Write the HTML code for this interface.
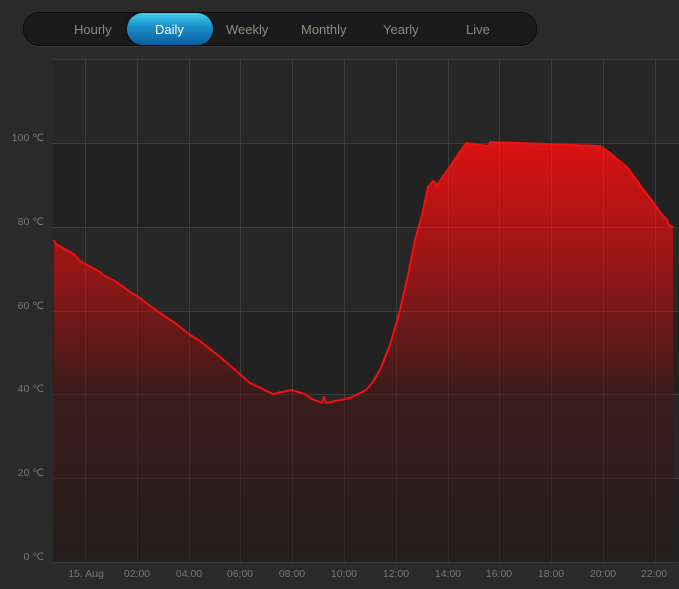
<!DOCTYPE html>
<html><head><meta charset="utf-8"><style>
html,body{margin:0;padding:0;background:#2a2a2a;width:679px;height:589px;overflow:hidden;font-family:"Liberation Sans",sans-serif}
.nav{position:absolute;left:23px;top:12px;width:512px;height:32px;border-radius:16px;background:#1a1a1a;border:1px solid #0c0c0c;box-shadow:0 1px 0 #3a3a3a}
.nav span{position:absolute;top:9px;font-size:13px;color:#8a8a8a}
.act{position:absolute;left:103px;top:0;width:86px;height:32px;border-radius:16px;background:linear-gradient(#3cd0ee,#1a8cc8 45%,#0a5fa0);box-shadow:0 0 2px #000}
</style></head><body>
<div class="nav">
<div class="act"></div>
<span style="left:50px">Hourly</span>
<span style="left:131px;color:#fff">Daily</span>
<span style="left:202px;color:#8a9080">Weekly</span>
<span style="left:277px;color:#8a9080">Monthly</span>
<span style="left:359px">Yearly</span>
<span style="left:442px">Live</span>
</div>
<svg width="679" height="589" style="position:absolute;left:0;top:0" xmlns="http://www.w3.org/2000/svg">
<defs><linearGradient id="g" x1="0" y1="143" x2="0" y2="562" gradientUnits="userSpaceOnUse">
<stop offset="0" stop-color="#ee1010"/><stop offset="0.3" stop-color="#a01414"/><stop offset="0.6" stop-color="#3e1a1a"/><stop offset="1" stop-color="#231d1d"/></linearGradient>
<g id="grid">
<line x1="53" y1="59.5" x2="679" y2="59.5"/><line x1="53" y1="143.5" x2="679" y2="143.5"/><line x1="53" y1="227.5" x2="679" y2="227.5"/><line x1="53" y1="311.5" x2="679" y2="311.5"/><line x1="53" y1="394.5" x2="679" y2="394.5"/><line x1="53" y1="478.5" x2="679" y2="478.5"/>
<line x1="85.5" y1="59" x2="85.5" y2="562"/><line x1="137.5" y1="59" x2="137.5" y2="562"/><line x1="189.5" y1="59" x2="189.5" y2="562"/><line x1="240.5" y1="59" x2="240.5" y2="562"/><line x1="292.5" y1="59" x2="292.5" y2="562"/><line x1="344.5" y1="59" x2="344.5" y2="562"/><line x1="396.5" y1="59" x2="396.5" y2="562"/><line x1="448.5" y1="59" x2="448.5" y2="562"/><line x1="499.5" y1="59" x2="499.5" y2="562"/><line x1="551.5" y1="59" x2="551.5" y2="562"/><line x1="603.5" y1="59" x2="603.5" y2="562"/><line x1="655.5" y1="59" x2="655.5" y2="562"/>
</g></defs>
<rect x="53" y="59" width="626" height="84" fill="#272727"/>
<rect x="53" y="143" width="626" height="84" fill="#222"/>
<rect x="53" y="227" width="626" height="84" fill="#272727"/>
<rect x="53" y="311" width="626" height="84" fill="#222"/>
<rect x="53" y="395" width="626" height="83" fill="#272727"/>
<rect x="53" y="478" width="626" height="84" fill="#222"/>
<use href="#grid" stroke="#333" stroke-width="1"/>
<line x1="53" y1="562.5" x2="679" y2="562.5" stroke="#3a3a3a"/>
<path d="M54,240 L56,244 L75,255 L78,259 L80,261 L100,272 L103,275 L115,281 L125,288 L130,292 L140,298 L150,306 L160,313 L175,323 L190,335 L200,341 L220,357 L233,368 L250,383 L273,394 L291,390 L305,394 L312,399 L322,403 L324,397 L326,403 L350,398 L366,390 L372,383 L380,370 L390,345 L400,310 L408,275 L415,240 L422,215 L428,187 L433,181 L436,184 L436,187 L466,143 L489,146 L490,142 L600,146 L610,153 L628,168 L640,185 L650,198 L660,212 L667,220 L669,225 L673,227 L673,562 L54,562 Z" fill="url(#g)" fill-opacity="0.9"/>
<use href="#grid" stroke="#ffffff" stroke-opacity="0.05" stroke-width="1"/>
<path d="M54,240 L56,244 L75,255 L78,259 L80,261 L100,272 L103,275 L115,281 L125,288 L130,292 L140,298 L150,306 L160,313 L175,323 L190,335 L200,341 L220,357 L233,368 L250,383 L273,394 L291,390 L305,394 L312,399 L322,403 L324,397 L326,403 L350,398 L366,390 L372,383 L380,370 L390,345 L400,310 L408,275 L415,240 L422,215 L428,187 L433,181 L436,184 L436,187 L466,143 L489,146 L490,142 L600,146 L610,153 L628,168 L640,185 L650,198 L660,212 L667,220 L669,225 L673,227" fill="none" stroke="#f01010" stroke-width="2" stroke-linejoin="round"/>
<g font-family="Liberation Sans, sans-serif" font-size="10.5" fill="#777" text-anchor="end">
<text x="44" y="141">100 ℃</text><text x="44" y="225">80 ℃</text><text x="44" y="309">60 ℃</text><text x="44" y="392">40 ℃</text><text x="44" y="476">20 ℃</text><text x="44" y="560">0 ℃</text>
</g>
<g font-family="Liberation Sans, sans-serif" font-size="10.5" fill="#777" text-anchor="middle">
<text x="86" y="577">15. Aug</text><text x="137" y="577">02:00</text><text x="189" y="577">04:00</text><text x="240" y="577">06:00</text><text x="292" y="577">08:00</text><text x="344" y="577">10:00</text><text x="396" y="577">12:00</text><text x="448" y="577">14:00</text><text x="499" y="577">16:00</text><text x="551" y="577">18:00</text><text x="603" y="577">20:00</text><text x="654" y="577">22:00</text>
</g>
</svg>
</body></html>
